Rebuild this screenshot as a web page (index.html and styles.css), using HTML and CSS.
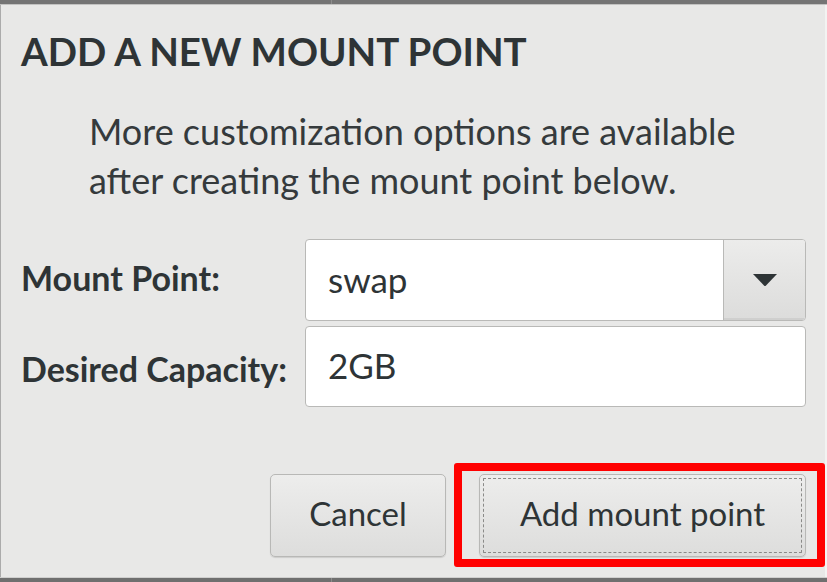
FILE: index.html
```html
<!DOCTYPE html>
<html lang="en">
<head>
<meta charset="utf-8">
<title>Add a new mount point</title>
<link rel="stylesheet" href="styles.css">
</head>
<body>
<div class="screen">
  <div class="topbar"><span class="seg-left"></span><span class="seg-right"></span></div>
  <div class="dialog">
    <h1 class="title">ADD A NEW MOUNT POINT</h1>
    <p class="hint">More customization options are available<br>after creating the mount point below.</p>
    <div class="form">
      <label class="lbl lbl-mount">Mount Point:</label>
      <div class="combo">
        <span class="combo-text">swap</span>
        <span class="combo-btn">
          <svg class="arrow" width="26" height="14" viewBox="0 0 26 14"><path d="M1 1 L25 1 L14 12.5 Q13 13.5 12 12.5 Z" fill="#2e3436"/></svg>
        </span>
      </div>
      <label class="lbl lbl-size">Desired Capacity:</label>
      <div class="entry">2GB</div>
    </div>
    <div class="actions">
      <button class="btn btn-cancel">Cancel</button>
      <button class="btn btn-add">Add mount point</button>
    </div>
  </div>
  <div class="bottombar"><span class="seg-left"></span><span class="seg-right"></span></div>
  <div class="highlight"></div>
</div>
</body>
</html>
```
FILE: styles.css
```css
* { box-sizing: border-box; }
html, body { margin: 0; padding: 0; }
body {
  background: #e8e8e7;
  font-family: "Lato", "Noto Sans", sans-serif;
  color: #2e3436;
}
.screen {
  position: relative;
  width: 827px;
  height: 582px;
  overflow: hidden;
  display: flex;
  flex-direction: column;
}
.topbar {
  height: 5px;
  display: flex;
  border-bottom: 1px solid #c2c2c1;
  background: #747474;
}
.seg-left { width: 332px; border-right: 1px solid #8c8c8c; }
.seg-right { flex: 1; }
.bottombar {
  height: 5px;
  display: flex;
  border-top: 1px solid #cfcfce;
  background: #6f6f6f;
}
.dialog {
  height: 572px;
  border-left: 1px solid #ababab;
  border-right: 2px solid #f3f3f2;
  padding: 0 19px 0 20px;
  display: flex;
  flex-direction: column;
}
.title {
  margin: 23px 0 0 0;
  font-size: 38.5px;
  line-height: 46px;
  font-weight: 700;
  color: #2e3436;
}
.hint {
  margin: 33px 0 0 0;
  padding-left: 68px;
  font-size: 36px;
  line-height: 49px;
  font-weight: 400;
  color: #353a3c;
}
.form {
  margin-top: 34px;
  display: grid;
  grid-template-columns: 284px 1fr;
  row-gap: 5px;
  align-items: center;
}
.lbl {
  font-size: 34px;
  font-weight: 700;
  color: #2e3436;
}
.lbl-mount { padding-bottom: 6px; }
.lbl-size { padding-top: 4px; }
.combo {
  height: 82px;
  display: flex;
  border: 1px solid #b9b9b7;
  border-radius: 4px;
  background: #fff;
  overflow: hidden;
}
.combo-text {
  flex: 1;
  display: flex;
  align-items: center;
  padding-left: 22px;
  padding-bottom: 3px;
  font-size: 35px;
}
.combo-btn {
  width: 82px;
  display: flex;
  align-items: center;
  justify-content: center;
  border-left: 1px solid #b9b9b7;
  background: linear-gradient(#ececeb, #dcdcdb);
  box-shadow: inset 0 -2px 0 #cfcfce;
}
.entry {
  height: 81px;
  display: flex;
  align-items: center;
  padding-left: 22px;
  padding-bottom: 3px;
  font-size: 35px;
  background: #fff;
  border: 1px solid #b9b9b7;
  border-radius: 4px;
}
.actions {
  margin-top: 67px;
  display: flex;
  justify-content: flex-end;
  gap: 33px;
}
.btn {
  height: 83px;
  font-family: "Lato", "Noto Sans", sans-serif;
  font-size: 33px;
  color: #2e3436;
  background: linear-gradient(#ededec, #dddddc);
  border: 1px solid #b8b8b6;
  border-radius: 5px;
  box-shadow: 0 1px 1px rgba(0,0,0,0.12);
  padding: 0 0 6px 0;
}
.btn-cancel { width: 176px; }
.btn-add {
  width: 327px;
  outline: 1px dashed #8a8a88;
  outline-offset: -5px;
}
.highlight {
  position: absolute;
  left: 454px;
  top: 463px;
  width: 371px;
  height: 104px;
  border: 8px solid #ff0000;
  border-radius: 3px;
}
```
